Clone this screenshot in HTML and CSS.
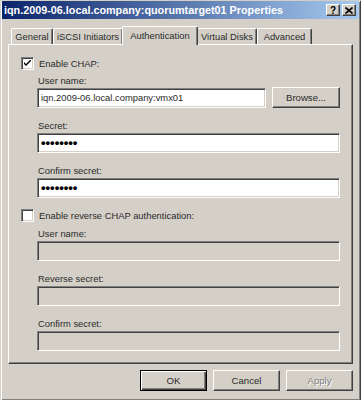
FILE: index.html
```html
<!DOCTYPE html>
<html lang="en">
<head>
    <meta charset="UTF-8">
    <meta name="viewport" content="width=device-width, initial-scale=1.0">
    <title>iqn.2009-06.local.company:quorumtarget01 Properties</title>
    <link rel="stylesheet" href="styles.css">
</head>
<body>
    <div class="window">
        <div class="titlebar">
            <span class="title">iqn.2009-06.local.company:quorumtarget01 Properties</span>
            <div class="title-btns">
                <span class="tbtn help">?</span>
                <span class="tbtn close">
                    <svg width="8" height="7" viewBox="0 0 8 7"><path d="M0.5 0.5 L7.5 6.5 M7.5 0.5 L0.5 6.5" stroke="#000" stroke-width="1.6"/></svg>
                </span>
            </div>
        </div>

        <div class="tabs">
            <div class="tab tab-general">General</div>
            <div class="tab tab-iscsi">iSCSI Initiators</div>
            <div class="tab tab-auth selected">Authentication</div>
            <div class="tab tab-disks">Virtual Disks</div>
            <div class="tab tab-advanced">Advanced</div>
        </div>

        <div class="panel">
            <div class="check-row">
                <span class="checkbox">
                    <svg width="7" height="7" viewBox="0 0 7 7"><path d="M0 2 L0 4 L2 6 L7 1 L7 -1 L2 4 Z" fill="#000"/></svg>
                </span>
                <span>Enable CHAP:</span>
            </div>
            <div class="field first">
                <div class="label">User name:</div>
                <div class="input-row">
                    <div class="textbox">iqn.2009-06.local.company:vmx01</div>
                    <button class="btn browse">Browse...</button>
                </div>
            </div>
            <div class="field">
                <div class="label">Secret:</div>
                <div class="textbox secret">&bull;&bull;&bull;&bull;&bull;&bull;&bull;&bull;</div>
            </div>
            <div class="field">
                <div class="label">Confirm secret:</div>
                <div class="textbox secret">&bull;&bull;&bull;&bull;&bull;&bull;&bull;&bull;</div>
            </div>

            <div class="check-row second">
                <span class="checkbox"></span>
                <span>Enable reverse CHAP authentication:</span>
            </div>
            <div class="field second-first">
                <div class="label">User name:</div>
                <div class="textbox disabled"></div>
            </div>
            <div class="field">
                <div class="label">Reverse secret:</div>
                <div class="textbox disabled"></div>
            </div>
            <div class="field">
                <div class="label">Confirm secret:</div>
                <div class="textbox disabled"></div>
            </div>
        </div>

        <div class="buttons">
            <button class="btn default">OK</button>
            <button class="btn">Cancel</button>
            <button class="btn" disabled>Apply</button>
        </div>
    </div>
</body>
</html>
```

FILE: styles.css
```css
body {
    margin: 0;
    padding: 0;
    font-family: "Liberation Sans", Arial, sans-serif;
    font-size: 9.4px;
    color: #2a2a2a;
    background-color: #d4d0c8;
}
.window {
    width: 361px;
    height: 400px;
    box-sizing: border-box;
    background-color: #d4d0c8;
    border: 1px solid;
    border-color: #d4d0c8 #404040 #404040 #d4d0c8;
    box-shadow: inset 1px 1px #fff, inset -1px -1px #808080;
    padding: 0 1px 0 1px;
    border-top: 0;
}
.titlebar {
    height: 18px;
    margin-top: 1px;
    display: flex;
    align-items: center;
    justify-content: space-between;
    padding: 0 3px 0 2px;
    background: linear-gradient(to right, #0a246a, #a6caf0);
}
.title {
    color: #fff;
    font-weight: bold;
    font-size: 10.8px;
    white-space: nowrap;
}
.title-btns {
    display: flex;
    gap: 2px;
}
.tbtn {
    width: 14px;
    height: 12px;
    box-sizing: border-box;
    display: flex;
    align-items: center;
    justify-content: center;
    background-color: #d4d0c8;
    border: 1px solid;
    border-color: #fff #404040 #404040 #fff;
    box-shadow: inset -1px -1px #808080;
    font-weight: bold;
    font-size: 10px;
    color: #000;
}
.tabs {
    display: flex;
    height: 18px;
    margin: 7px 6px 0 6px;
    padding-left: 3px;
}
.tab {
    height: 16px;
    margin-top: 2px;
    box-sizing: border-box;
    padding-top: 2px;
    text-align: center;
    border: 1px solid;
    border-color: #fff #404040 transparent #fff;
    border-bottom: 0;
    border-radius: 2px 2px 0 0;
    box-shadow: inset -1px 0 #808080;
    white-space: nowrap;
    line-height: 12px;
}
.tab-general {
    width: 42px;
}
.tab-iscsi {
    width: 70px;
}
.tab-auth {
    width: 76px;
}
.tab-disks {
    width: 60px;
}
.tab-advanced {
    width: 55px;
}
.tab.selected {
    height: 19px;
    margin: 0 -1px;
    padding-top: 3px;
    position: relative;
    z-index: 1;
    background-color: #d4d0c8;
}
.panel {
    height: 320px;
    box-sizing: border-box;
    margin: 0 6px;
    padding: 12px 12px 0 12px;
    border: 1px solid;
    border-color: #fff #404040 #404040 #fff;
    box-shadow: inset -1px -1px #808080;
}
.check-row {
    display: flex;
    align-items: center;
    gap: 5px;
    height: 13px;
    line-height: 13px;
}
.check-row.second {
    margin-top: 11px;
}
.checkbox {
    width: 13px;
    height: 13px;
    box-sizing: border-box;
    display: flex;
    align-items: center;
    justify-content: center;
    background-color: #fff;
    border: 1px solid;
    border-color: #808080 #fff #fff #808080;
    box-shadow: inset 1px 1px #404040, inset -1px -1px #d4d0c8;
}
.field {
    margin-left: 16px;
    margin-top: 11px;
}
.field.first {
    margin-top: 4px;
}
.field.second-first {
    margin-top: 5px;
}
.label {
    height: 13px;
    line-height: 13px;
    padding-left: 1px;
    margin-bottom: 1px;
}
.field.first .label {
    margin-bottom: 0;
}
.input-row {
    display: flex;
    gap: 6px;
    align-items: flex-end;
}
.input-row .textbox {
    flex: 1;
}
.textbox {
    height: 20px;
    box-sizing: border-box;
    padding: 0 3px;
    line-height: 18px;
    background-color: #fff;
    border: 1px solid;
    border-color: #808080 #fff #fff #808080;
    box-shadow: inset 1px 1px #404040, inset -1px -1px #d4d0c8;
    white-space: nowrap;
    overflow: hidden;
}
.textbox.secret {
    font-size: 13px;
    font-weight: bold;
    letter-spacing: 0;
    line-height: 17px;
    color: #000;
}
.textbox.disabled {
    background-color: #d4d0c8;
}
.btn {
    font-family: "Liberation Sans", Arial, sans-serif;
    font-size: 9.6px;
    color: #2a2a2a;
    width: 67px;
    height: 21px;
    padding: 0;
    box-sizing: border-box;
    background-color: #d4d0c8;
    border: 1px solid;
    border-color: #fff #404040 #404040 #fff;
    box-shadow: inset -1px -1px #808080;
}
.btn.browse {
    width: 68px;
}
.btn.default {
    border-color: #000;
    box-shadow: inset 1px 1px #fff, inset -1px -1px #404040, inset -2px -2px #808080;
}
.btn:disabled {
    color: #808080;
    text-shadow: 1px 1px #fff;
}
.buttons {
    display: flex;
    justify-content: flex-end;
    gap: 6px;
    margin: 6px 6px 0 0;
}
```
